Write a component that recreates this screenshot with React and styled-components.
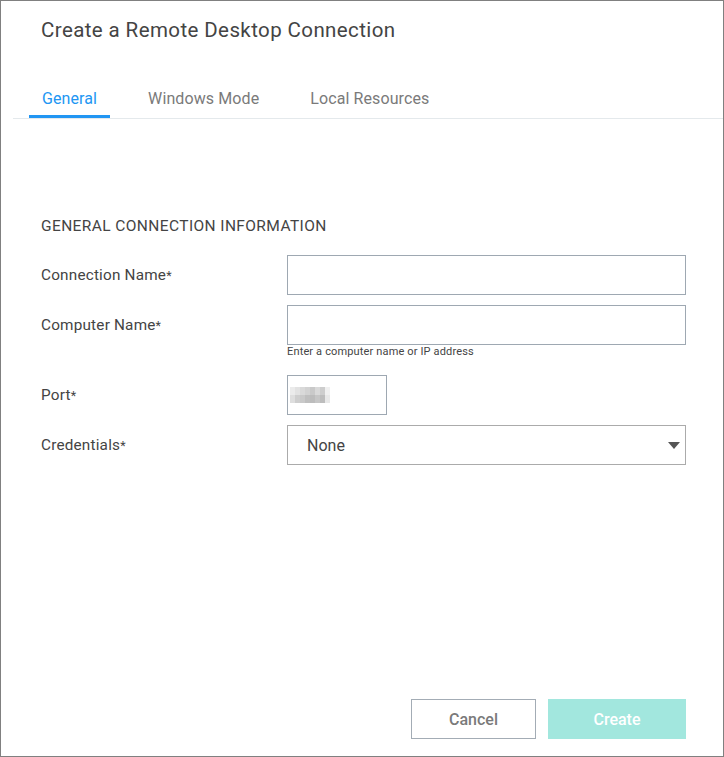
import React from "react";
import styled, { createGlobalStyle } from "styled-components";

const Global = createGlobalStyle`
  html, body { margin: 0; padding: 0; background: #ffffff; }
  body { font-family: Roboto, "Liberation Sans", sans-serif; }
  * { box-sizing: border-box; }
`;

const Dialog = styled.div`
  width: 724px;
  height: 757px;
  border: 1px solid #808080;
  background: #fff;
  display: flex;
  flex-direction: column;
  color: #444;
`;

const Title = styled.h1`
  margin: 17px 0 0 40px;
  font-size: 20.5px;
  line-height: 24px;
  font-weight: 400;
  letter-spacing: 0.4px;
  color: #444;
`;

const TabBar = styled.div`
  margin: 38px 0 0 12px;
  display: flex;
  gap: 25px;
  padding-left: 16px;
  border-bottom: 1px solid #e4e9ec;
`;

const Tab = styled.div`
  padding: 9px 13px 6px;
  font-size: 16px;
  line-height: 20px;
  letter-spacing: 0.1px;
  color: ${(p) => (p.$active ? "#2196f3" : "#7a7a7a")};
  border-bottom: 3px solid ${(p) => (p.$active ? "#2196f3" : "transparent")};
`;

const Content = styled.div`
  padding: 98px 37px 0 40px;
  display: flex;
  flex-direction: column;
`;

const SectionTitle = styled.div`
  font-size: 15.5px;
  line-height: 18px;
  letter-spacing: 0.4px;
  color: #444;
  text-transform: uppercase;
  margin-bottom: 20px;
`;

const Form = styled.div`
  display: flex;
  flex-direction: column;
  gap: 10px;
`;

const Row = styled.div`
  display: flex;
  align-items: flex-start;
`;

const Label = styled.div`
  width: 246px;
  height: 40px;
  display: flex;
  align-items: center;
  font-size: 15.3px;
  letter-spacing: 0.2px;
  color: #444;
`;

const Req = styled.span`
  font-size: 12.5px;
  vertical-align: -2px;
  margin-left: 0;
`;

const Field = styled.div`
  display: flex;
  flex-direction: column;
`;

const Input = styled.div`
  width: ${(p) => p.$width || 399}px;
  height: 40px;
  border: 1px solid #9ea8b2;
  background: #fff;
  display: flex;
  align-items: center;
  padding-left: 2px;
`;

const Helper = styled.div`
  font-size: 11px;
  line-height: 14px;
  letter-spacing: 0.15px;
  color: #444;
  padding-bottom: 6px;
`;

const Select = styled.div`
  width: 399px;
  height: 40px;
  border: 1px solid #ababab;
  display: flex;
  align-items: center;
  justify-content: space-between;
  padding: 0 5px 0 19px;
  font-size: 16px;
  color: #444;
`;

const Footer = styled.div`
  margin-top: auto;
  display: flex;
  justify-content: flex-end;
  gap: 12px;
  padding: 0 37px 17px 0;
`;

const Button = styled.button`
  height: 40px;
  width: ${(p) => p.$width}px;
  font-family: Roboto, "Liberation Sans", sans-serif;
  font-size: 16px;
  font-weight: 500;
  border: 1px solid ${(p) => (p.$primary ? "#a2e7de" : "#a3acb5")};
  background: ${(p) => (p.$primary ? "#a2e7de" : "#fff")};
  color: ${(p) => (p.$primary ? "#fff" : "#7a7a7a")};
  padding: 0;
`;

const Mosaic = () => {
  const top = ["#ebebeb", "#e2e2e2", "#d9d9d9", "#d2d2d2", "#c9c9c9", "#d9d9d9", "#cdcdcd", "#f0f0f0"];
  const bot = ["#dedede", "#cecece", "#c9c9c9", "#bfbfbf", "#bcbcbc", "#c6c6c6", "#bdbdbd", "#e8e8e8"];
  return (
    <svg width="40" height="16" viewBox="0 0 40 16">
      {top.map((c, i) => (
        <rect key={"t" + i} x={i * 5} y="0" width="5" height="8" fill={c} />
      ))}
      {bot.map((c, i) => (
        <rect key={"b" + i} x={i * 5} y="8" width="5" height="8" fill={c} />
      ))}
    </svg>
  );
};

export default function App() {
  return (
    <>
      <Global />
      <Dialog>
        <Title>Create a Remote Desktop Connection</Title>
        <TabBar>
          <Tab $active>General</Tab>
          <Tab>Windows Mode</Tab>
          <Tab>Local Resources</Tab>
        </TabBar>
        <Content>
          <SectionTitle>General Connection Information</SectionTitle>
          <Form>
            <Row>
              <Label>
                Connection Name<Req>*</Req>
              </Label>
              <Field>
                <Input />
              </Field>
            </Row>
            <Row>
              <Label>
                Computer Name<Req>*</Req>
              </Label>
              <Field>
                <Input />
                <Helper>Enter a computer name or IP address</Helper>
              </Field>
            </Row>
            <Row>
              <Label>
                Port<Req>*</Req>
              </Label>
              <Field>
                <Input $width={100}>
                  <Mosaic />
                </Input>
              </Field>
            </Row>
            <Row>
              <Label>
                Credentials<Req>*</Req>
              </Label>
              <Field>
                <Select>
                  <span>None</span>
                  <svg width="12" height="7" viewBox="0 0 12 7">
                    <path d="M0 0 L12 0 L6 7 Z" fill="#555" />
                  </svg>
                </Select>
              </Field>
            </Row>
          </Form>
        </Content>
        <Footer>
          <Button $width={125}>Cancel</Button>
          <Button $primary $width={138}>Create</Button>
        </Footer>
      </Dialog>
    </>
  );
}
